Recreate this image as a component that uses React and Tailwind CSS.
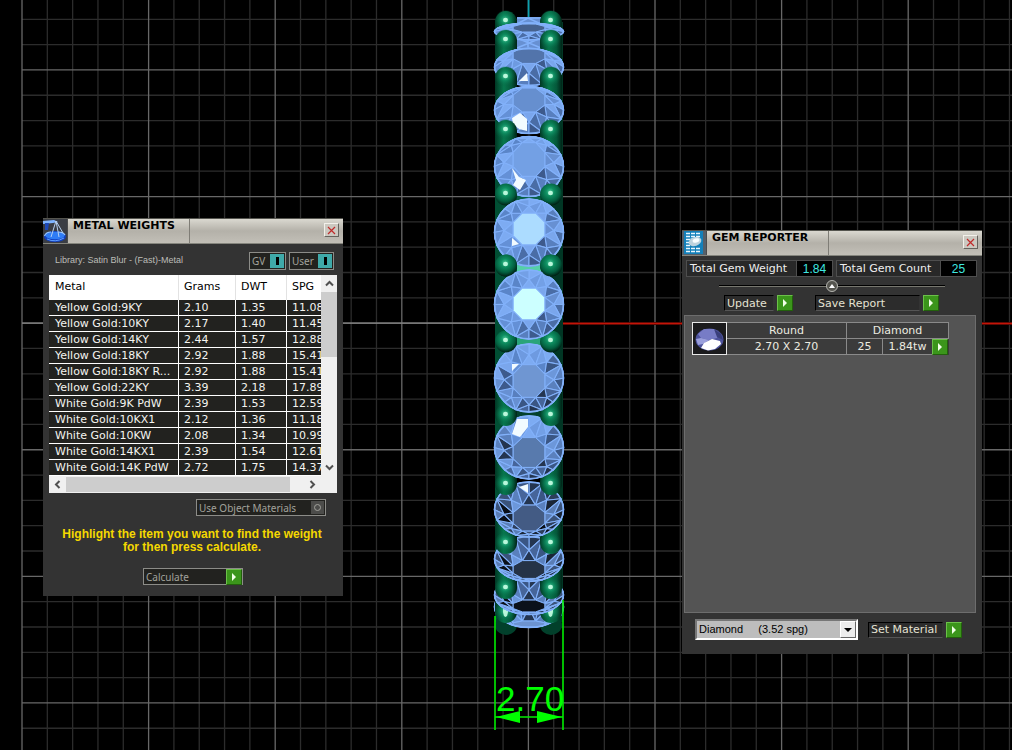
import React from "react";

const METALS = [
  ["Yellow Gold:9KY", "2.10", "1.35", "11.08"],
  ["Yellow Gold:10KY", "2.17", "1.40", "11.45"],
  ["Yellow Gold:14KY", "2.44", "1.57", "12.88"],
  ["Yellow Gold:18KY", "2.92", "1.88", "15.41"],
  ["Yellow Gold:18KY R...", "2.92", "1.88", "15.41"],
  ["Yellow Gold:22KY", "3.39", "2.18", "17.89"],
  ["White Gold:9K PdW", "2.39", "1.53", "12.59"],
  ["White Gold:10KX1", "2.12", "1.36", "11.18"],
  ["White Gold:10KW", "2.08", "1.34", "10.99"],
  ["White Gold:14KX1", "2.39", "1.54", "12.61"],
  ["White Gold:14K PdW", "2.72", "1.75", "14.37"],
];

/* ---------- viewport: grid ---------- */

const CELL = 25.32;

function Grid() {
  const cols = Array.from({ length: 120 }, (_, i) => i);
  const rows = Array.from({ length: 80 }, (_, i) => i);
  const order = [false, true];
  return (
    <svg className="absolute inset-0 h-full w-full" aria-hidden="true">
      {order.map((major) => (
        <g key={String(major)} stroke={major ? "#686868" : "#2c2c2c"} strokeWidth="1.3">
          {cols
            .filter((i) => (i % 5 === 0) === major)
            .map((i) => (
              <line key={"c" + i} x1={22 + i * CELL} x2={22 + i * CELL} y1="0" y2="100%" />
            ))}
          {rows
            .filter((i) => (i % 5 === 2) === major)
            .map((i) => (
              <line key={"r" + i} x1="22" x2="100%" y1={19.3 + i * CELL} y2={19.3 + i * CELL} />
            ))}
        </g>
      ))}
      <line x1="22" x2="528" y1="323.2" y2="323.2" stroke="#858585" strokeWidth="1.2" />
      <rect x="529" y="322" width="100%" height="3" fill="#000" />
      <line x1="529" x2="100%" y1="323.5" y2="323.5" stroke="#c41408" strokeWidth="1.8" />
      <line x1="528.6" x2="528.6" y1="0" y2="323" stroke="#0c9fae" strokeWidth="1.8" />
    </svg>
  );
}

/* ---------- viewport: ring ---------- */

const CX = 529;

// cy/ry: girdle ellipse, ty/tr: table facet
const GEMS = [
  { cy: 31.5, ry: 9, ty: 28, tr: 4, table: "#46628f", tone: 0 },
  { cy: 67, ry: 19, ty: 55.5, tr: 8, table: "#5274ab", tone: 0, glint: "519,81 527,73 528,81" },
  { cy: 110, ry: 24, ty: 100, tr: 12, table: "#668fcf", tone: 0, glint: "512,118 520,113 527,119 527,131 519,129 513,124" },
  { cy: 166.5, ry: 30.5, ty: 159.5, tr: 17, table: "#73a0e4", tone: 0, glint: "512,168 519,177 526,180 520,190 513,185 516,180" },
  { cy: 232.5, ry: 34, ty: 229, tr: 16, table: "#acdcff", tone: 0, glint: "512,238 519,244 512,246" },
  { cy: 304.5, ry: 35, ty: 304, tr: 16, table: "#ccffff", tone: 0 },
  { cy: 378, ry: 34.5, ty: 381, tr: 16.5, table: "#6f96d2", tone: 1, glint: "512,364 519,364 512,371" },
  { cy: 447.5, ry: 32, ty: 452.5, tr: 15, table: "#587aad", tone: 2, glint: "517,419 528,419 528,427 520,437 512,434" },
  { cy: 509.5, ry: 28, ty: 518, tr: 13, table: "#435b84", tone: 3, glint: "519,487 528,484 528,493" },
  { cy: 559, ry: 23, ty: 569.5, tr: 9, table: "#253347", tone: 3 },
  { cy: 595, ry: 20, ty: 606, tr: 6, table: "#0b111b", tone: 3 },
  { cy: 607, ry: 21, ty: 624, tr: 3, table: "#6d93d0", tone: 3 },
];
const PRONGS = [20, 39, 76, 129, 193, 264, 340, 414, 483, 542, 587, 611];

const LIGHT = ["#73a0e6", "#6490d6", "#7dabf2", "#5a85c8", "#6e9ae0"];
const MID = ["#4a6da6", "#6790d2", "#3d5a8c", "#7aa6ec", "#587fbe"];
const DEEP = ["#3a5684", "#6c97da", "#243550", "#5a80bd", "#46659a"];
const NIGHT = ["#1a2536", "#5a7db5", "#0a0f18", "#3a5279", "#2d3e5b"];

function Gem({ gem, id }) {
  const at = (f, deg) => {
    const a = (deg * Math.PI) / 180;
    const k = (1 - f) / 0.51;
    const mid = gem.cy + (gem.ty - gem.cy) * k;
    const squash = gem.ry / 35 + (gem.tr / 16 - gem.ry / 35) * k;
    return [CX + 35 * f * Math.cos(a), mid + 35 * f * squash * Math.sin(a)];
  };
  const pts = (list) => list.map((p) => p[0].toFixed(1) + "," + p[1].toFixed(1)).join(" ");
  const shade = (n, deg) => {
    const side = Math.cos(((deg - 30) * Math.PI) / 180) > 0.25;
    const top = Math.sin((deg * Math.PI) / 180) < -0.6;
    const palette =
      gem.tone === 0 ? (side ? MID : LIGHT)
      : gem.tone === 1 ? (top ? LIGHT : side ? DEEP : MID)
      : gem.tone === 2 ? (top ? LIGHT : DEEP)
      : top ? DEEP : NIGHT;
    return palette[n % 5];
  };
  const facets = [];
  for (let i = 0; i < 8; i++) {
    const a = i * 45;
    const tip = at(0.71, a);
    const nextTip = at(0.71, a + 45);
    const v = at(0.49, a + 22.5);
    const pv = at(0.49, a - 22.5);
    const g = at(1, a);
    facets.push([[pv, tip, v], shade(i + 1, a)]);
    facets.push([[tip, g, at(1, a + 11), at(1, a + 22.5)], shade(i * 2, a + 10)]);
    facets.push([[tip, g, at(1, a - 11), at(1, a - 22.5)], shade(i * 2 + 3, a - 10)]);
    facets.push([[v, tip, at(1, a + 22.5)], shade(i + 3, a + 15)]);
    facets.push([[v, nextTip, at(1, a + 22.5)], shade(i + 4, a + 30)]);
  }
  const table = Array.from({ length: 8 }, (_, i) => at(0.49, i * 45 + 22.5));
  return (
    <g clipPath={`url(#${id})`}>
      <clipPath id={id}>
        <ellipse cx={CX} cy={gem.cy} rx="35.3" ry={gem.ry + 0.3} />
      </clipPath>
      <ellipse cx={CX} cy={gem.cy} rx="35" ry={gem.ry} fill="#6f9be0" />
      {facets.map(([p, c], i) => (
        <polygon key={i} points={pts(p)} fill={c} stroke="#82b1fa" strokeWidth="1.1" />
      ))}
      <polygon points={pts(table)} fill={gem.table} stroke="#82b1fa" strokeWidth="1" />
      {gem.glint && <polygon points={gem.glint} fill="#f2fbff" />}
      <ellipse cx={CX} cy={gem.cy} rx="34.5" ry={gem.ry - 0.5} fill="none" stroke="#82b1fa" strokeWidth="2" />
    </g>
  );
}

// dir -1: stem runs down behind the next gem, 1: stem runs up, 0: bare bead
function ProngPair({ y, dir }) {
  return [506, 551].map((x) => (
    <g key={x}>
      {dir === 0 ? (
        <circle cx={x} cy={y + 1.5} r="11" fill="url(#bead)" />
      ) : (
        <>
          <rect x={x - 11} y={dir < 0 ? y - 9 : y - 30} width="22" height="42" rx="11" fill="url(#stem)" />
          <circle cx={x} cy={y + 1} r="11" fill="url(#gloss)" />
        </>
      )}
      <ellipse cx={x - 0.5} cy={y} rx="2.5" ry={y > 600 ? 6 : 2.2} fill="#c8ffe4" opacity="0.9" />
    </g>
  ));
}

function Ring() {
  const upper = [<ProngPair key="p0" y={PRONGS[0]} dir={-1} />];
  const lower = [];
  for (let i = 0; i < 5; i++) {
    upper.push(<Gem key={"g" + i} gem={GEMS[i]} id={"gem" + i} />);
    upper.push(<ProngPair key={"p" + (i + 1)} y={PRONGS[i + 1]} dir={i < 3 ? -1 : 0} />);
  }
  for (let i = 11; i >= 5; i--) {
    lower.push(<Gem key={"g" + i} gem={GEMS[i]} id={"gem" + i} />);
    lower.push(<ProngPair key={"p" + i} y={PRONGS[i]} dir={i > 6 ? 1 : 0} />);
  }
  return (
    <svg
      className="absolute left-0 top-0"
      width="700"
      height="750"
      viewBox="0 0 700 750"
      role="img"
      aria-label="Eternity ring, side view, 2.70 wide"
    >
      <defs>
        <radialGradient id="bead" cx="0.46" cy="0.38" r="0.62">
          <stop offset="0" stopColor="#4cc79a" />
          <stop offset="0.3" stopColor="#0e8f61" />
          <stop offset="0.7" stopColor="#036040" />
          <stop offset="1" stopColor="#001f14" />
        </radialGradient>
        <radialGradient id="gloss" cx="0.46" cy="0.45" r="0.5">
          <stop offset="0" stopColor="#4cc79a" />
          <stop offset="0.4" stopColor="#0f9063" stopOpacity="0.85" />
          <stop offset="1" stopColor="#056040" stopOpacity="0" />
        </radialGradient>
        <linearGradient id="stem">
          <stop offset="0" stopColor="#003824" />
          <stop offset="0.4" stopColor="#07784e" />
          <stop offset="0.75" stopColor="#04583a" />
          <stop offset="1" stopColor="#002417" />
        </linearGradient>
      </defs>
      <rect x="495" y="22" width="22" height="600" fill="#014f34" />
      <rect x="517" y="17" width="24" height="610" fill="#000" />
      <rect x="541" y="22" width="22" height="600" fill="#013624" />
      <rect x="517" y="17" width="24" height="32" fill="#6790d2" />
      <path d="M517 18H541M517 24L528 18L541 24M517 48L541 38M541 48L517 38M528 38V48" stroke="#82b1fa" strokeWidth="1.5" fill="none" />
      <rect x="517" y="194" width="24" height="10" fill="#075f45" />
      <rect x="517" y="263" width="24" height="10" fill="#55cfa8" />
      <rect x="517" y="337" width="24" height="10" fill="#2aa47a" />
      <rect x="517" y="410" width="24" height="8" fill="#04402c" />
      <ellipse cx="506" cy="625" rx="11" ry="10" fill="#02402b" />
      <ellipse cx="551" cy="625" rx="11" ry="10" fill="#02402b" />
      {upper}
      {lower}
      <g stroke="#00ee00" strokeWidth="1.6">
        <line x1="495" x2="495" y1="616" y2="730" />
        <line x1="563" x2="563" y1="600" y2="730" />
        <line x1="495" x2="563" y1="717" y2="717" />
      </g>
      <polygon points="496,717 520,711 520,723" fill="#00ff00" />
      <polygon points="562,717 537,711 537,723" fill="#00ff00" />
      <text x="496" y="711" fontSize="35" fill="#00ff00" className="font-['Liberation_Sans',sans-serif]">
        2.70
      </text>
    </svg>
  );
}

/* ---------- shared widgets ---------- */

function PlayBox() {
  return (
    <span className="flex size-4 shrink-0 items-center justify-center border border-t-[#6cc04a] border-r-[#22600c] border-b-[#22600c] border-l-[#6cc04a] bg-[#3b951b]">
      <svg width="6" height="8" viewBox="0 0 6 8" aria-hidden="true">
        <path d="M1 0L5 4L1 8Z" fill="#f2ffe8" />
      </svg>
    </span>
  );
}

function TitleBar({ title, icon }) {
  return (
    <header className="flex h-[25px] border-b border-[#85857d] bg-linear-to-b from-[#dad8d0] via-[#b4b1a9] to-[#c2bfb7]">
      <span className="w-[25px] shrink-0 bg-[#4b4c4d]">{icon}</span>
      <h2 className="w-[122px] shrink-0 border-r border-[#7f7d76] pl-[5px] text-[11px] leading-[13px] font-bold whitespace-nowrap text-black">
        {title}
      </h2>
      <div className="flex flex-1 items-start justify-end pt-1 pr-1">
        <button
          aria-label="Close"
          className="flex h-[14px] w-[15px] items-center justify-center border border-t-[#f2f0ea] border-r-[#66645e] border-b-[#66645e] border-l-[#f2f0ea] bg-[#cbc8c0]"
        >
          <svg width="9" height="9" viewBox="0 0 9 9" aria-hidden="true">
            <path d="M1 1L8 8M8 1L1 8" stroke="#c02a2a" strokeWidth="1.2" />
          </svg>
        </button>
      </div>
    </header>
  );
}

function ScaleIcon() {
  return (
    <svg width="24" height="24" viewBox="0 0 24 24" aria-hidden="true">
      <rect width="24" height="24" fill="#3a3d44" />
      <path d="M0 2L11 1L15 3L10 4L0 5Z" fill="#7fb4ff" />
      <path d="M2 4H6L5 11H2Z" fill="#1d49b8" />
      <ellipse cx="12" cy="17.500" rx="11" ry="5.500" fill="#1140c0" />
      <ellipse cx="12" cy="16.500" rx="9.500" ry="3.800" fill="#2f7cf5" />
      <path d="M1.500 17Q3 13 8 13M22 16Q20 13 15 13" stroke="#9cc8ff" strokeWidth="1.2" fill="none" />
      <path d="M13 2L8 18M13 2L20 14M13 2L16 18" stroke="#b5cfef" strokeWidth="1" fill="none" />
      <path d="M4 20Q12 24 21 19" stroke="#5f9dff" strokeWidth="1" fill="none" />
    </svg>
  );
}

function ReportIcon() {
  return (
    <svg width="24" height="24" viewBox="0 0 24 24" aria-hidden="true">
      <rect width="24" height="24" fill="#55606a" />
      <rect x="2" y="0" width="19" height="23" fill="#1380ba" />
      <path
        d="M4 2.500H19M4 5.500H19M4 8.500H9M4 11.500H7M4 14.500H9M4 17.500H19M4 20.500H19"
        stroke="#e8f7ff"
        strokeWidth="1.4"
        strokeDasharray="4 1"
      />
      <ellipse cx="13" cy="10.500" rx="6.500" ry="4.500" transform="rotate(-18 13 10.500)" fill="#bdd3de" />
      <ellipse cx="14" cy="9.500" rx="3.500" ry="2" transform="rotate(-18 14 9.500)" fill="#f8feff" />
    </svg>
  );
}

function GemThumb() {
  return (
    <svg width="33" height="31" viewBox="0 0 33 31" aria-hidden="true">
      <rect width="33" height="31" fill="#1b1b1d" />
      <ellipse cx="16.500" cy="16.500" rx="14" ry="11" fill="#4d529c" />
      <path d="M5 11L11 6H21L26 10L24 15L16 17L8 15Z" fill="#777cc6" />
      <path d="M3 16L8 15L16 17L10 21L5 22Z" fill="#9a9fdc" />
      <path d="M8 25L11 20L19 16L27 18L28 21L22 26L15 27.500Z" fill="#ffffff" />
      <path d="M21 6L28 11L30 17L24 14Z" fill="#3a3f7c" />
    </svg>
  );
}

/* ---------- metal weights ---------- */

function Toggle({ label, width }) {
  return (
    <button
      aria-pressed="true"
      className={width + " flex h-[18px] items-center border border-[#8c8c88] bg-[#22221f] pr-px pl-0.5 text-[10px] leading-none text-[#a2a29c]"}
    >
      <span className="flex-1 text-left font-['Noto_Sans',sans-serif]">{label}</span>
      <span className="flex size-[14px] items-center justify-center bg-[#3fa9a9]">
        <span className="h-2 w-[3px] bg-black" />
      </span>
    </button>
  );
}

function Chevron({ d }) {
  return (
    <svg width="9" height="9" viewBox="0 0 9 9" fill="none" stroke="#505050" strokeWidth="2" aria-hidden="true">
      <path d={d} />
    </svg>
  );
}

function MetalTable() {
  return (
    <div className="mx-[6px] bg-[#f0f0f0]">
      <div className="flex">
        <div className="min-w-0 flex-1 overflow-hidden">
          <table className="w-[300px] table-fixed border-separate border-spacing-0 text-[11px]">
            <colgroup>
              <col className="w-[130px]" />
              <col className="w-[57px]" />
              <col className="w-[51px]" />
              <col className="w-[62px]" />
            </colgroup>
            <thead>
              <tr className="h-[25px] bg-white text-left text-black">
                {["Metal", "Grams", "DWT", "SPG"].map((h) => (
                  <th key={h} scope="col" className="border-r border-[#e2e2e2] p-0 font-normal first:pl-[6px] not-first:pl-[5px]">
                    {h}
                  </th>
                ))}
              </tr>
            </thead>
            <tbody>
              {METALS.map((row) => (
                <tr key={row[0]} className="h-4 bg-[#22221f] text-[#f4f4f0]">
                  {row.map((v, i) => (
                    <td
                      key={i}
                      className="border-r border-b border-white p-0 pt-px leading-[14px] whitespace-nowrap first:pl-[6px] not-first:pl-[5px]"
                    >
                      {v}
                    </td>
                  ))}
                </tr>
              ))}
            </tbody>
          </table>
        </div>
        <div className="flex w-4 flex-col items-center justify-between py-1">
          <div className="flex flex-col items-center gap-1">
            <Chevron d="M1 6.500L4.500 3L8 6.500" />
            <div className="h-[65px] w-4 bg-[#cdcdcd]" />
          </div>
          <Chevron d="M1 2.500L4.500 6L8 2.500" />
        </div>
      </div>
      <div className="flex h-[17px] items-center pr-5 pl-1">
        <Chevron d="M6.500 1L3 4.500L6.500 8" />
        <div className="ml-1 h-[15px] w-[224px] bg-[#cdcdcd]" />
        <span className="flex-1" />
        <Chevron d="M2.500 1L6 4.500L2.500 8" />
      </div>
    </div>
  );
}

function MetalWeights() {
  return (
    <section className="absolute top-[218px] left-[43px] w-[300px] border-t border-[#55554f] bg-[#333333] pb-[11px]">
      <TitleBar title="METAL WEIGHTS" icon={<ScaleIcon />} />
      <div className="flex items-start justify-between pt-2 pr-[9px] pb-[5px] pl-3">
        <p className="pt-0.5 font-['Liberation_Sans',sans-serif] text-[9px] leading-3 text-[#bdbdb8]">
          Library: Satin Blur - (Fast)-Metal
        </p>
        <div className="flex gap-[3px]">
          <Toggle label="GV" width="w-[37px]" />
          <Toggle label="User" width="w-[45px]" />
        </div>
      </div>
      <MetalTable />
      <div className="flex justify-end pt-[6px] pr-[17px]">
        <button
          aria-pressed="false"
          className="flex h-[17px] w-[130px] items-center justify-between border border-[#8c8c88] bg-[#22221f] pr-px pl-0.5 text-[10px] leading-none text-[#a2a29c]"
        >
          <span className="font-['Noto_Sans',sans-serif]">Use Object Materials</span>
          <span className="flex size-[13px] items-center justify-center bg-[#4c4c4a]">
            <span className="size-[7px] rounded-full border border-[#a2a29c]" />
          </span>
        </button>
      </div>
      <p className="pt-3 pr-0.5 text-center font-['Liberation_Sans',sans-serif] text-[12px] leading-[13px] font-bold text-[#f5d800]">
        Highlight the item you want to find the weight
        <br />
        for then press calculate.
      </p>
      <div className="flex justify-center pt-[14px]">
        <button className="flex h-[17px] w-[100px] items-center justify-between border border-[#8c8c88] bg-[#22221f] pl-0.5 text-[10px] leading-none text-[#a2a29c]">
          <span className="font-['Noto_Sans',sans-serif]">Calculate</span>
          <PlayBox />
        </button>
      </div>
    </section>
  );
}

/* ---------- gem reporter ---------- */

function Total({ label, value, width }) {
  return (
    <div className={width + " flex h-[17px] items-center border border-[#4e4e4e] bg-[#282828] leading-none"}>
      <span className="flex-1 pl-[3px] text-[11px] whitespace-nowrap text-[#efefef]">{label}</span>
      <output className="flex h-full w-9 items-center justify-center border-l border-[#4e4e4e] bg-black font-['Liberation_Sans',sans-serif] text-[12px] text-[#3fe8e0]">
        {value}
      </output>
    </div>
  );
}

function ActionButton({ label, width }) {
  return (
    <button className="flex items-center gap-[3px] text-[11px] leading-none text-[#e4e2d2]">
      <span
        className={width + " flex h-4 items-center border border-t-black border-r-[#333] border-b-[#555] border-l-black bg-[#2c2c2c] pl-0.5 whitespace-nowrap"}
      >
        {label}
      </span>
      <PlayBox />
    </button>
  );
}

function GemReporter() {
  return (
    <section className="absolute top-[230px] left-[682px] w-[300px] border-t border-[#55554f] bg-[#333333] pb-[14px]">
      <TitleBar title="GEM REPORTER" icon={<ReportIcon />} />
      <div className="flex gap-[3px] pt-1 pl-1">
        <Total label="Total Gem Weight" value="1.84" width="w-[147px]" />
        <Total label="Total Gem Count" value="25" width="w-[141px]" />
      </div>
      <div className="mx-[37px] flex h-[18px] items-center">
        <span className="h-0.5 flex-1 border-t border-black bg-[#77776f]" />
        <button aria-label="Collapse" className="flex size-3 items-center justify-center rounded-full border border-[#b5b5b0] bg-[#55554f]">
          <svg width="6" height="4" viewBox="0 0 6 4" aria-hidden="true">
            <path d="M0 4L3 0L6 4Z" fill="#fff" />
          </svg>
        </button>
        <span className="h-0.5 flex-1 border-t border-black bg-[#77776f]" />
      </div>
      <div className="flex gap-[22px] pl-[42px]">
        <ActionButton label="Update" width="w-[50px]" />
        <ActionButton label="Save Report" width="w-[105px]" />
      </div>
      <div className="mt-1 mr-[6px] ml-0.5 h-[298px] border border-[#6d6d6d] bg-[#545454] pt-[6px] pl-[7px]">
        <div className="flex items-start">
          <div className="flex h-[33px] w-[35px] items-center justify-center border border-[#e8e8e8] bg-[#1b1b1d]">
            <GemThumb />
          </div>
          <table className="w-[222px] table-fixed border-separate border-spacing-0 border-t border-[#8a8a8a] text-center text-[11px] leading-[15px] text-[#ecebe0]">
            <colgroup>
              <col className="w-[120px]" />
              <col className="w-9" />
              <col className="w-[49px]" />
              <col className="w-[17px]" />
            </colgroup>
            <tbody>
              <tr className="h-4 bg-[#3b3b3b]">
                <td className="border-r border-b border-[#8a8a8a] p-0">Round</td>
                <td colSpan={3} className="border-r border-b border-[#8a8a8a] p-0">
                  Diamond
                </td>
              </tr>
              <tr className="h-4 bg-[#3b3b3b]">
                <td className="border-r border-b border-[#8a8a8a] p-0">2.70 X 2.70</td>
                <td className="border-r border-b border-[#8a8a8a] p-0">25</td>
                <td className="border-b border-[#8a8a8a] p-0">1.84tw</td>
                <td className="p-0">
                  <button aria-label="Open 2.70 round diamond" className="block">
                    <PlayBox />
                  </button>
                </td>
              </tr>
            </tbody>
          </table>
        </div>
      </div>
      <div className="flex items-center gap-[10px] pt-[6px] pl-[13px]">
        <div className="relative w-[163px]">
          <select
            aria-label="Gem material"
            className="block h-[21px] w-full appearance-none rounded-none border-2 border-t-[#777] border-r-white border-b-white border-l-[#777] bg-[#bdbdbd] pl-0.5 font-['Liberation_Sans',sans-serif] text-[11px] text-black"
          >
            <option>{"Diamond\u00a0\u00a0\u00a0\u00a0\u00a0(3.52 spg)"}</option>
          </select>
          <span className="pointer-events-none absolute top-0.5 right-0.5 flex h-[17px] w-4 items-center justify-center border border-t-white border-r-[#666] border-b-[#666] border-l-white bg-[#ececec]">
            <svg width="8" height="4" viewBox="0 0 8 4" aria-hidden="true">
              <path d="M0 0H8L4 4Z" fill="#000" />
            </svg>
          </span>
        </div>
        <ActionButton label="Set Material" width="w-[75px]" />
      </div>
    </section>
  );
}

export default function App() {
  return (
    <main className="relative min-h-screen overflow-hidden bg-black font-['DejaVu_Sans',sans-serif]">
      <Grid />
      <Ring />
      <MetalWeights />
      <GemReporter />
    </main>
  );
}
